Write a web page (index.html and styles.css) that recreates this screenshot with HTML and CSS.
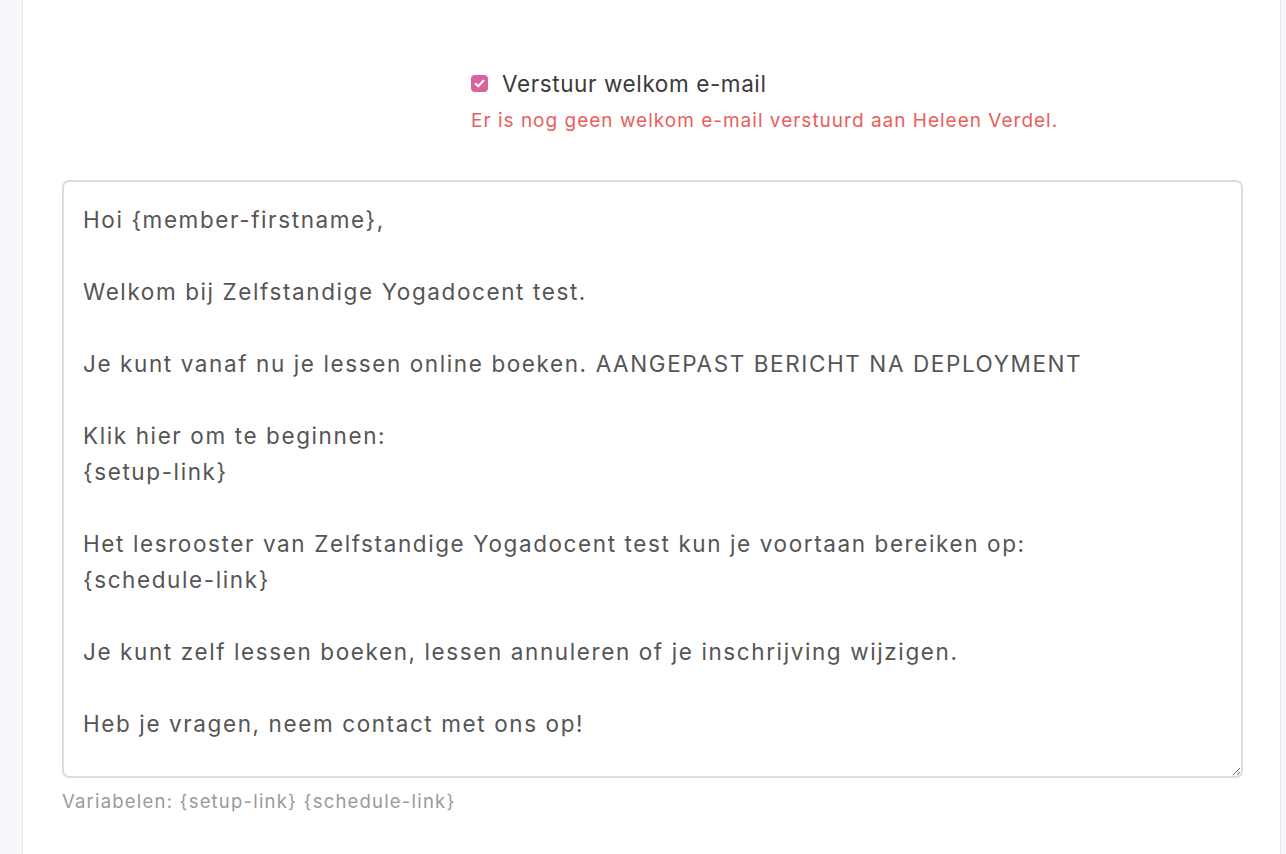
FILE: index.html
```html
<!DOCTYPE html>
<html lang="nl">
<head>
<meta charset="utf-8">
<title>Welkom e-mail</title>
<link rel="stylesheet" href="styles.css">
</head>
<body>
<div class="page">
  <div class="inner">
    <div class="options">
      <label class="check-row">
        <span class="checkbox" aria-hidden="true">
          <svg viewBox="0 0 16 16" width="13" height="13"><path d="M3.2 8.4 L6.4 11.4 L12.8 4.6" fill="none" stroke="#fff" stroke-width="2.6" stroke-linecap="round" stroke-linejoin="round"/></svg>
        </span>
        <span class="check-label">Verstuur welkom e-mail</span>
      </label>
      <p class="warning">Er is nog geen welkom e-mail verstuurd aan Heleen Verdel.</p>
    </div>
    <textarea class="message" spellcheck="false">Hoi {member-firstname},

Welkom bij Zelfstandige Yogadocent test.

Je kunt vanaf nu je lessen online boeken. AANGEPAST BERICHT NA DEPLOYMENT

Klik hier om te beginnen:
{setup-link}

Het lesrooster van Zelfstandige Yogadocent test kun je voortaan bereiken op:
{schedule-link}

Je kunt zelf lessen boeken, lessen annuleren of je inschrijving wijzigen.

Heb je vragen, neem contact met ons op!</textarea>
    <p class="hint">Variabelen: {setup-link} {schedule-link}</p>
  </div>
</div>
</body>
</html>
```

FILE: styles.css
```css
html, body {
  margin: 0;
  padding: 0;
}
body {
  background: #f6f7fb;
  font-family: Inter, "Liberation Sans", Arial, sans-serif;
  height: 854px;
  overflow: hidden;
}
.page {
  margin-left: 22px;
  width: 1257px;
  height: 854px;
  background: #fff;
  border-left: 1px solid #e6e7eb;
  border-right: 1px solid #e6e7eb;
}
.inner {
  padding: 0 37px 0 39px;
}
.options {
  padding-top: 70px;
  margin-left: 409px;
}
.check-row {
  display: flex;
  align-items: center;
  gap: 14px;
  height: 26px;
}
.checkbox {
  width: 17px;
  height: 17px;
  border-radius: 4px;
  background: #d9629d;
  display: flex;
  align-items: center;
  justify-content: center;
}
.check-label {
  font-size: 22.5px;
  letter-spacing: 0.6px;
  color: #3a3a3a;
}
.warning {
  margin: 13px 0 0;
  font-size: 19px;
  letter-spacing: 1px;
  color: #e8605d;
}
.message {
  display: block;
  box-sizing: border-box;
  width: 1181px;
  height: 598px;
  margin-top: 48px;
  padding: 20px 19px;
  border: 2px solid #dcdcdc;
  border-radius: 7px;
  font-family: Inter, "Liberation Sans", Arial, sans-serif;
  font-size: 22.5px;
  letter-spacing: 1.6px;
  line-height: 36px;
  color: #555;
  background: #fff;
  resize: vertical;
  overflow: hidden;
  outline: none;
}
.hint {
  margin: 12px 0 0;
  font-size: 18.5px;
  letter-spacing: 1.2px;
  color: #9a9a9a;
}
```
